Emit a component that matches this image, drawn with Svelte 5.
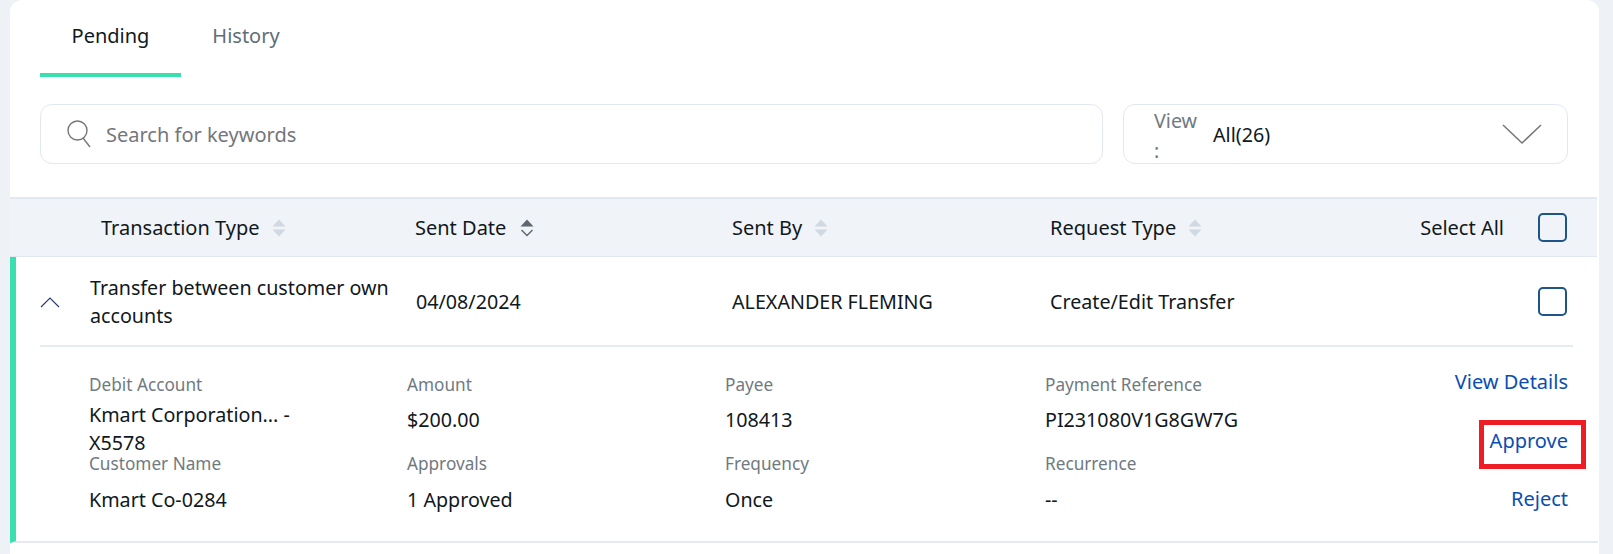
<script>
	const details = [
		[
			{ label: 'Debit Account', value: 'Kmart Corporation... - X5578', narrow: true },
			{ label: 'Amount', value: '$200.00' },
			{ label: 'Payee', value: '108413' },
			{ label: 'Payment Reference', value: 'PI231080V1G8GW7G' }
		],
		[
			{ label: 'Customer Name', value: 'Kmart Co-0284', low: true },
			{ label: 'Approvals', value: '1 Approved', low: true },
			{ label: 'Frequency', value: 'Once', low: true },
			{ label: 'Recurrence', value: '--', low: true }
		]
	];
	const columns = [
		{ name: 'Sent Date', active: true },
		{ name: 'Sent By' },
		{ name: 'Request Type' }
	];
</script>

{#snippet sortIcon(active)}
	<svg class="sort" class:active width="14" height="18" viewBox="0 0 14 18" aria-hidden="true">
		<path class="up" d="M7 .5 13.5 7.5H.5Z" />
		{#if active}
			<path class="down" d="M1.5 11 7 16.5 12.5 11" />
		{:else}
			<path class="up" d="M.5 10.5H13.5L7 17.5Z" />
		{/if}
	</svg>
{/snippet}

<main class="card">
	<nav class="tabs">
		<button class="tab selected">Pending</button>
		<button class="tab history">History</button>
	</nav>

	<div class="filters">
		<div class="box search">
			<svg width="24" height="28" viewBox="0 0 24 28" aria-hidden="true">
				<circle cx="10.5" cy="10.5" r="9.5" />
				<path d="M16 18 23 27" />
			</svg>
			<span>Search for keywords</span>
		</div>
		<div class="box view">
			<span class="view-label">View :</span>
			<span class="view-value">All(26)</span>
			<svg class="caret" width="40" height="22" viewBox="0 0 40 22" aria-hidden="true">
				<path d="M1 2 20 20 39 2" />
			</svg>
		</div>
	</div>

	<div class="head">
		<div class="first">Transaction Type {@render sortIcon(false)}</div>
		{#each columns as col}
			<div class:sorted={col.active}>{col.name} {@render sortIcon(col.active)}</div>
		{/each}
		<div class="select-all">Select All <span class="check"></span></div>
	</div>

	<section class="row">
		<div class="summary">
			<svg class="chevron" width="20" height="12" viewBox="0 0 20 12" aria-hidden="true">
				<path d="M1 11 10 2 19 11" />
			</svg>
			<div class="title">Transfer between customer own accounts</div>
			<div>04/08/2024</div>
			<div>ALEXANDER FLEMING</div>
			<div>Create/Edit Transfer</div>
			<span class="check"></span>
		</div>

		<div class="expanded">
			<div class="fields">
				{#each details as line}
					{#each line as field}
						<div class="field">
							<div class="label">{field.label}</div>
							<div class="value" class:narrow={field.narrow} class:low={field.low}>{field.value}</div>
						</div>
					{/each}
				{/each}
			</div>
			<div class="actions">
				<a href="#details">View Details</a>
				<a href="#approve" class="marked">Approve</a>
				<a href="#reject">Reject</a>
			</div>
		</div>
	</section>
</main>

<style>
	:global(body) {
		background: #eef1f5;
		font-family: 'Noto Sans', 'Open Sans', sans-serif;
	}

	.card {
		box-sizing: border-box;
		width: 1589px;
		height: 554px;
		margin-left: 10px;
		background: #fff;
		border-radius: 12px 12px 0 0;
		color: #101820;
		font-size: 19.7px;
	}

	.tabs {
		display: flex;
		padding-left: 30px;
	}

	.tab {
		width: 141px;
		height: 77px;
		padding: 0 0 3px;
		background: none;
		border: none;
		border-bottom: 4px solid transparent;
		color: #5f6e78;
		font: inherit;
		font-size: 20px;
	}

	.tab.selected {
		color: #101820;
		border-bottom-color: #3adfb0;
	}

	.tab.history {
		width: 130px;
	}

	.filters {
		display: flex;
		gap: 20px;
		padding: 27px 30px 0;
	}

	.box {
		box-sizing: border-box;
		display: flex;
		align-items: center;
		height: 60px;
		background: #fff;
		border: 1px solid #e2e8f0;
		border-radius: 12px;
	}

	.search {
		width: 1063px;
		padding-left: 26px;
		gap: 15px;
		color: #74767c;
		font-size: 20px;
	}

	.search svg {
		fill: none;
		stroke: #74767c;
		stroke-width: 1.4;
	}

	.view {
		width: 445px;
		padding: 0 25px 0 30px;
	}

	.view-label {
		width: 48px;
		margin-right: 11px;
		padding-top: 3px;
		color: #6f7a80;
		line-height: 30px;
	}

	.view-value {
		flex: 1;
	}

	.caret {
		fill: none;
		stroke: #74767c;
		stroke-width: 1.5;
	}

	.head {
		box-sizing: border-box;
		display: grid;
		grid-template-columns: 314px 317px 318px 1fr auto;
		align-items: center;
		width: 1587px;
		height: 60px;
		margin-top: 33px;
		padding: 0 30px 0 91px;
		background: #f0f3f7;
		border-top: 2px solid #e2e8f0;
		border-bottom: 1px solid #e2e8f0;
		font-size: 20px;
	}

	.head > div {
		display: flex;
		align-items: center;
		gap: 12px;
	}

	.head > .sorted {
		gap: 14px;
	}

	.sort {
		flex: none;
		fill: #d0d8e2;
	}

	.sort.active .up {
		fill: #5e6670;
	}

	.sort .down {
		fill: none;
		stroke: #5e6670;
		stroke-width: 1.4;
	}

	.head > .select-all {
		gap: 34px;
	}

	.check {
		box-sizing: border-box;
		display: block;
		width: 29px;
		height: 29px;
		border: 2px solid #1f5488;
		border-radius: 5px;
	}

	.row {
		box-sizing: border-box;
		width: 1588px;
		border-left: 6px solid #3adfb0;
		border-bottom: 2px solid #e6e9ef;
	}

	.summary {
		box-sizing: border-box;
		display: grid;
		grid-template-columns: 50px 326px 316px 318px 1fr auto;
		align-items: center;
		height: 90px;
		margin: 0 25px 0 24px;
		padding: 1px 6px 0 0;
		border-bottom: 2px solid #e6ebf1;
	}

	.chevron {
		fill: none;
		stroke: #2a3a78;
		stroke-width: 1.2;
	}

	.title {
		padding-right: 14px;
		line-height: 28px;
	}

	.expanded {
		display: flex;
		justify-content: space-between;
		height: 194px;
		padding: 24px 30px 0 73px;
		box-sizing: border-box;
	}

	.fields {
		display: grid;
		grid-template-columns: 318px 318px 320px 1fr;
		grid-auto-rows: 79px;
		flex: 1;
	}

	.label {
		color: #6f7a80;
		font-size: 17.2px;
		line-height: 28px;
	}

	.value {
		margin-top: 7px;
		line-height: 28px;
	}

	.value.low {
		margin-top: 8px;
	}

	.value.narrow {
		width: 220px;
		margin-top: 2px;
	}

	.actions {
		display: flex;
		flex-direction: column;
		align-items: flex-end;
		gap: 30.5px;
		margin-top: -3px;
		font-size: 20px;
	}

	.actions a {
		position: relative;
		color: #0b4db0;
		line-height: 28px;
		text-decoration: none;
	}

	.marked::after {
		content: '';
		position: absolute;
		inset: -7px -18px -14px -11px;
		border: 5px solid #ee1c25;
	}
</style>
